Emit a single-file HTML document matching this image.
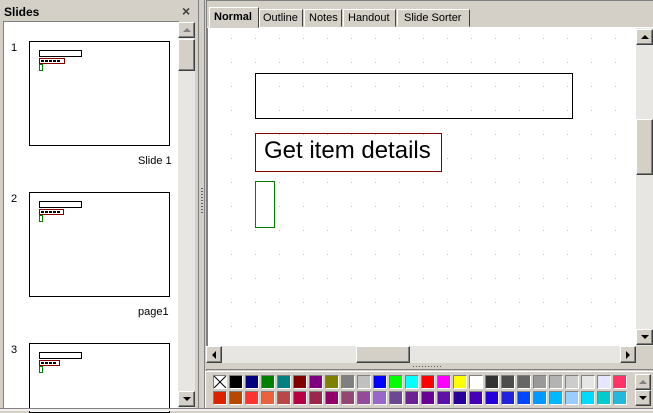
<!DOCTYPE html>
<html><head><meta charset="utf-8"><style>
*{margin:0;padding:0;box-sizing:border-box}
body{width:653px;height:411px;overflow:hidden;background:#d4d0c8;font-family:"Liberation Sans",sans-serif;font-size:11px;position:relative}
.a{position:absolute}
.btn{position:absolute;background:#d4d0c8;border:1px solid;border-color:#fff #404040 #404040 #fff;box-shadow:inset -1px -1px #808080}
.tri{position:absolute;width:0;height:0}
.sw{position:absolute;width:14px;height:14px;border:1px solid;border-color:#808080 #fff #fff #808080}
.tt{position:absolute;left:9px;top:16px;width:26px;height:6px;border:1px solid #800000;background:#fff}
.tt i{position:absolute;left:1px;top:1px;width:20px;height:2px;background:repeating-linear-gradient(90deg,#000 0 3px,#fff 3px 4px)}
</style></head><body>
<!-- left panel -->
<div class="a" style="left:0;top:0;width:199px;height:411px;background:#d4d0c8;border-right:1px solid #808080"></div>
<div class="a" style="left:4px;top:5px;font-weight:bold;font-size:12px">Slides</div>
<div class="a" style="left:182px;top:3px;font-size:14px;font-weight:bold;color:#404040">×</div>
<div class="a" style="left:3px;top:21px;width:176px;height:389px;background:#fff;border-top:1px solid #808080;border-left:1px solid #808080"></div>
<div class="a" style="left:178px;top:22px;width:17px;height:387px;background:#e8e6e2"></div>
<div class="btn" style="left:178px;top:22px;width:17px;height:16px"><div class="tri" style="left:4px;top:5px;border-left:4px solid transparent;border-right:4px solid transparent;border-bottom:4px solid #808080"></div></div>
<div class="btn" style="left:178px;top:39px;width:17px;height:32px"></div>
<div class="btn" style="left:178px;top:391px;width:17px;height:16px"><div class="tri" style="left:4px;top:5px;border-left:4px solid transparent;border-right:4px solid transparent;border-top:4px solid #000"></div></div>
<!-- thumbs -->
<div class="a" style="left:11px;top:42px">1</div>
<div class="a" style="left:29px;top:41px;width:141px;height:105px;border:1px solid #000;background:#fff">
 <div class="a" style="left:9px;top:8px;width:43px;height:7px;border:1px solid #000"></div>
 <div class="tt"><i></i></div>
 <div class="a" style="left:9px;top:22px;width:4px;height:7px;border:1px solid #008000"></div>
</div>
<div class="a" style="left:138px;top:155px;font-size:11px">Slide 1</div>
<div class="a" style="left:11px;top:193px">2</div>
<div class="a" style="left:29px;top:192px;width:141px;height:105px;border:1px solid #000;background:#fff">
 <div class="a" style="left:9px;top:8px;width:43px;height:7px;border:1px solid #000"></div>
 <div class="tt" style="width:25px"><i></i></div>
 <div class="a" style="left:9px;top:22px;width:4px;height:7px;border:1px solid #008000"></div>
</div>
<div class="a" style="left:138px;top:306px">page1</div>
<div class="a" style="left:11px;top:344px">3</div>
<div class="a" style="left:29px;top:343px;width:141px;height:70px;border:1px solid #000;background:#fff">
 <div class="a" style="left:9px;top:8px;width:43px;height:7px;border:1px solid #000"></div>
 <div class="tt" style="width:21px"><i style="width:16px"></i></div>
 <div class="a" style="left:9px;top:22px;width:4px;height:7px;border:1px solid #008000"></div>
</div>
<!-- splitter -->
<div class="a" style="left:199px;top:0;width:6px;height:411px;background:#d4d0c8;border-right:1px solid #808080"></div>
<div class="a" style="left:201px;top:188px;width:2px;height:26px;background:repeating-linear-gradient(#606060 0 1px,transparent 1px 3px)"></div>
<!-- right -->
<div class="a" style="left:206px;top:0;width:447px;height:371px;border-left:1px solid #808080;border-top:1px solid #808080"></div>
<div class="a" style="left:207px;top:27px;width:446px;height:1px;background:#fff"></div>
<div class="a" style="left:209px;top:7px;width:50px;height:21px;background:#d4d0c8;border:1px solid;border-color:#fff #404040 transparent #fff;font-weight:bold;padding:3px 0 0 4px">Normal</div>
<div class="a" style="left:259px;top:9px;width:44px;height:18px;border:1px solid;border-color:#fff #404040 transparent #fff;padding:2px 0 0 3px">Outline</div>
<div class="a" style="left:304px;top:9px;width:38px;height:18px;border:1px solid;border-color:#fff #404040 transparent #fff;padding:2px 0 0 4px">Notes</div>
<div class="a" style="left:343px;top:9px;width:53px;height:18px;border:1px solid;border-color:#fff #404040 transparent #fff;padding:2px 0 0 4px">Handout</div>
<div class="a" style="left:397px;top:9px;width:73px;height:18px;border:1px solid;border-color:#fff #404040 transparent #fff;padding:2px 0 0 6px">Slide Sorter</div>
<!-- canvas -->
<div class="a" style="left:206px;top:28px;width:430px;height:318px;background:#fff;border-left:2px solid #808080"></div>
<svg class="a" style="left:208px;top:28px" width="428" height="318">
<defs><pattern id="d" x="23" y="10" width="24" height="24" patternUnits="userSpaceOnUse"><rect width="1" height="1" fill="#c0c0c0"/></pattern></defs>
<rect width="428" height="318" fill="url(#d)"/></svg>
<div class="a" style="left:255px;top:73px;width:318px;height:46px;border:1px solid #000"></div>
<div class="a" style="left:255px;top:133px;width:187px;height:39px;border:1px solid #800000;font-size:24px;padding:3px 0 0 8px;white-space:nowrap;background:transparent">Get item details</div>
<div class="a" style="left:255px;top:181px;width:20px;height:47px;border:1px solid #008000"></div>
<!-- vscroll -->
<div class="a" style="left:636px;top:28px;width:17px;height:318px;background:#e8e6e2"></div>
<div class="btn" style="left:636px;top:29px;width:17px;height:16px"><div class="tri" style="left:4px;top:5px;border-left:4px solid transparent;border-right:4px solid transparent;border-bottom:4px solid #000"></div></div>
<div class="btn" style="left:636px;top:119px;width:17px;height:56px"></div>
<div class="btn" style="left:636px;top:329px;width:17px;height:16px"><div class="tri" style="left:4px;top:5px;border-left:4px solid transparent;border-right:4px solid transparent;border-top:4px solid #000"></div></div>
<!-- hscroll -->
<div class="a" style="left:206px;top:346px;width:430px;height:17px;background:#e8e6e2"></div>
<div class="btn" style="left:206px;top:346px;width:16px;height:17px"><div class="tri" style="left:5px;top:4px;border-top:4px solid transparent;border-bottom:4px solid transparent;border-right:4px solid #000"></div></div>
<div class="btn" style="left:356px;top:346px;width:54px;height:17px"></div>
<div class="btn" style="left:620px;top:346px;width:16px;height:17px"><div class="tri" style="left:5px;top:4px;border-top:4px solid transparent;border-bottom:4px solid transparent;border-left:4px solid #000"></div></div>
<!-- palette splitter -->
<div class="a" style="left:206px;top:363px;width:447px;height:7px;background:#d4d0c8;border-bottom:1px solid #808080"></div>
<div class="a" style="left:413px;top:366px;width:30px;height:1px;background:repeating-linear-gradient(90deg,#606060 0 1px,transparent 1px 3px)"></div>
<div class="a" style="left:205px;top:371px;width:448px;height:38px;border-left:1px solid #fff;border-top:1px solid #fff"></div>
<div class="a" style="left:0;top:408px;width:653px;height:3px;background:#f0f0f0;border-top:1px solid #808080"></div>
<div id="pal"></div>
<div class="btn" style="left:635px;top:374px;width:16px;height:16px"><div class="tri" style="left:3px;top:5px;border-left:4px solid transparent;border-right:4px solid transparent;border-bottom:4px solid #808080"></div></div>
<div class="btn" style="left:635px;top:390px;width:16px;height:16px"><div class="tri" style="left:3px;top:5px;border-left:4px solid transparent;border-right:4px solid transparent;border-top:4px solid #000"></div></div>
<svg class="a" style="left:214px;top:376px" width="12" height="12"><line x1="0" y1="0" x2="12" y2="12" stroke="#000"/><line x1="12" y1="0" x2="0" y2="12" stroke="#000"/></svg>
<script>
var r1=["#fff","#000","#000080","#008000","#008080","#800000","#800080","#808000","#808080","#c0c0c0","#0000ff","#00ff00","#00ffff","#ff0000","#ff00ff","#ffff00","#fff","#333","#4d4d4d","#666","#999","#b3b3b3","#ccc","#e6e6e6","#e6e6ff","#ff3366"];
var r2=["#dc2300","#b84700","#ff3333","#eb613d","#b84747","#b80047","#99284c","#94006b","#944771","#944c9a","#9966cc","#6b4794","#6b2394","#6b0094","#5e11a6","#280099","#4700b8","#2300dc","#2323dc","#0047ff","#0099ff","#00b8ff","#99ccff","#00dcff","#00cccc","#23b8dc"];
var h="";
for(var i=0;i<26;i++){h+='<div class="sw" style="left:'+(213+i*16)+'px;top:375px;background:'+r1[i]+'"></div>';h+='<div class="sw" style="left:'+(213+i*16)+'px;top:391px;background:'+r2[i]+'"></div>';}
document.getElementById("pal").innerHTML=h;
</script>
</body></html>
